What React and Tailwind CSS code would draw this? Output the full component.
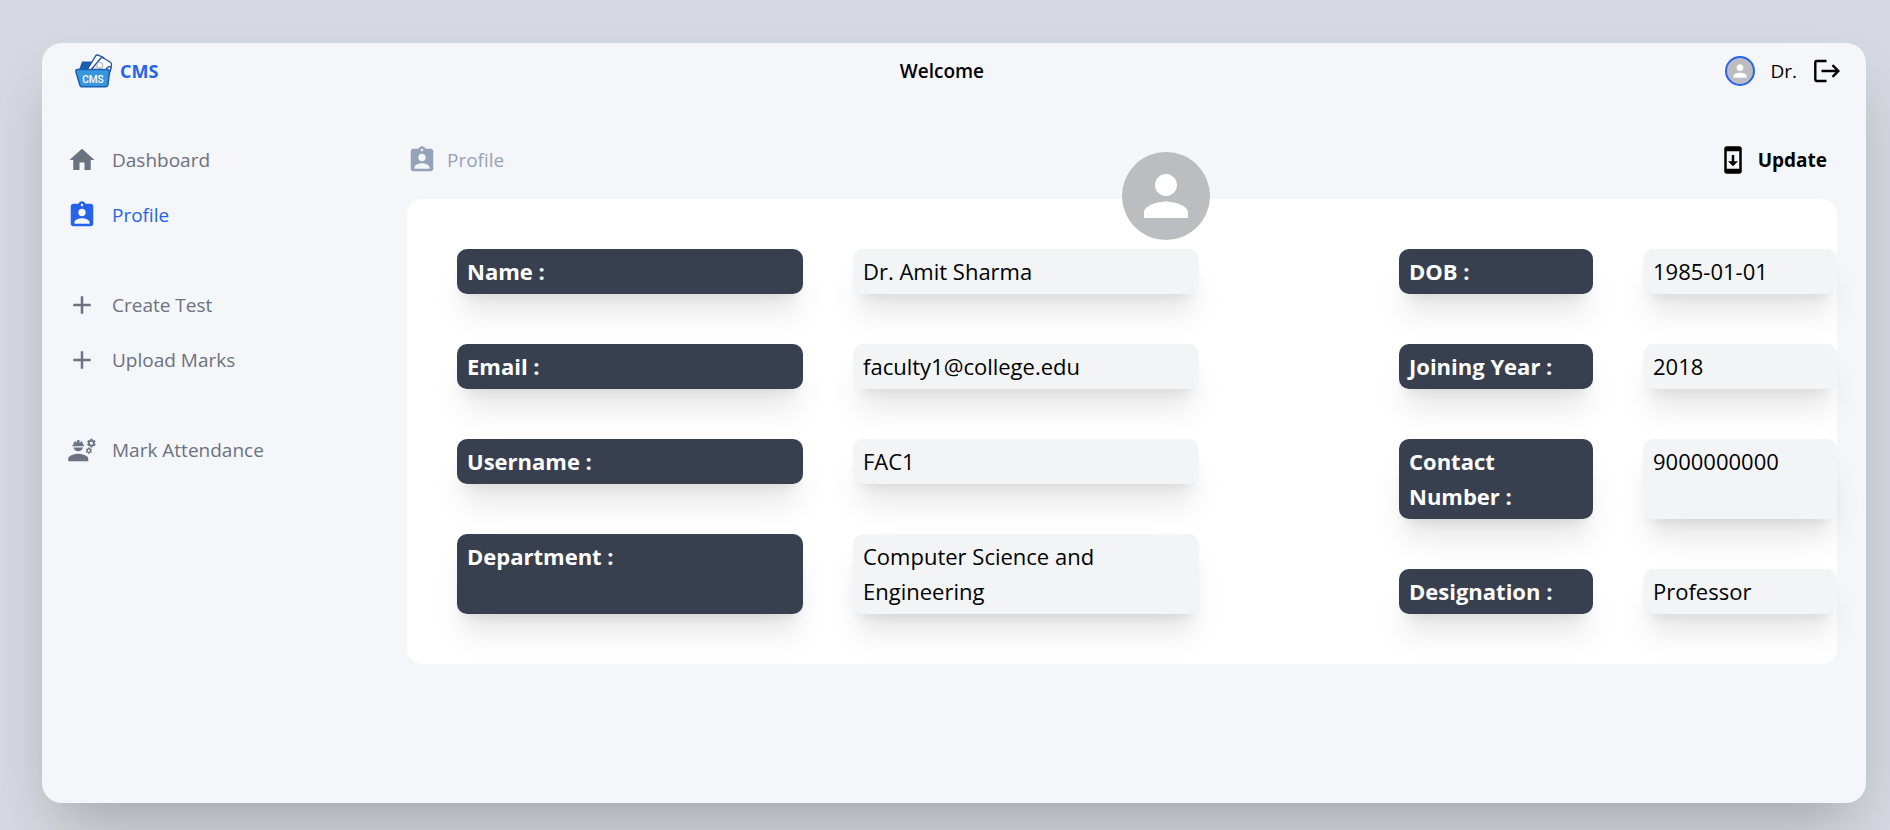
import { MdHome, MdAssignmentInd, MdAdd, MdEngineering, MdSystemUpdate, MdPerson } from "react-icons/md";

function Logo() {
  return (
    <svg viewBox="0 0 38 34" className="h-[34px] w-[38px]" role="img" aria-label="CMS logo">
      <path d="M1.500 16 4.500 14.500 7 7.500h10l1.500 3-1 6H3z" fill="#1c5fb0" />
      <path d="M12 16 20.500 2.200c.6-1 1.600-1.400 2.700-1L28.500 3.500 18 16z" fill="#fff" stroke="#1f4f9a" strokeWidth="1.300" />
      <path d="m15.500 16.500 10-12c.8-.9 1.700-1 2.800-.5L35 8c1.400.8 1.900 1.700 1.500 3L34 20.500 31 16.500z" fill="#fff" stroke="#1f4f9a" strokeWidth="1.300" />
      <circle cx="24.800" cy="11.300" r="3" fill="none" stroke="#b5bcc7" strokeWidth="1.200" />
      <path d="m20.500 14.500 1.500-2" stroke="#b5bcc7" strokeWidth="1" />
      <path d="M31.500 16c-.5-2.500 3-4.500 4.300-2.500.6 2-.6 4-2.300 6.500" fill="#fff" stroke="#1f4f9a" strokeWidth="1.300" />
      <path d="M2.500 15.500h30c1.300 0 2.200 1 2 2.400l-1.500 12.600c-.2 1.500-1.200 2.300-2.700 2.300H7.500c-1.500 0-2.500-.9-2.800-2.300L1 18c-.4-1.500.2-2.500 1.500-2.500z" fill="#3897dc" stroke="#1c5fb0" strokeWidth="1.500" />
      <text x="18" y="28.500" textAnchor="middle" fontSize="10" fontWeight="500" fontFamily="Roboto, sans-serif" fill="#fff">CMS</text>
    </svg>
  );
}

function LogoutIcon() {
  return (
    <svg viewBox="0 0 28 26" className="h-[26px] w-7" fill="none" stroke="currentColor" strokeWidth="2.400" aria-hidden="true">
      <path d="M14.500 3H4.500a1.200 1.200 0 0 0-1.200 1.200v17.600A1.200 1.200 0 0 0 4.500 23h10" />
      <path d="M9.500 13h16.500M20.500 7.200 26.300 13l-5.800 5.800" />
    </svg>
  );
}

const navGroups = [
  [
    { label: "Dashboard", Icon: MdHome },
    { label: "Profile", Icon: MdAssignmentInd, active: true },
  ],
  [
    { label: "Create Test", Icon: MdAdd },
    { label: "Upload Marks", Icon: MdAdd },
  ],
  [{ label: "Mark Attendance", Icon: MdEngineering }],
];

const personal = [
  ["Name", "Dr. Amit Sharma"],
  ["Email", "faculty1@college.edu"],
  ["Username", "FAC1"],
  ["Department", "Computer Science and Engineering"],
];

const employment = [
  ["DOB", "1985-01-01"],
  ["Joining Year", "2018"],
  ["Contact Number", "9000000000"],
  ["Designation", "Professor"],
];

const boxShadow = "shadow-[0_25px_31px_-6px_rgb(0_0_0/0.1),0_10px_13px_-8px_rgb(0_0_0/0.1)]";

function Details({ rows }) {
  return (
    <dl className="flex min-w-0 flex-col gap-[50px] text-[22px] leading-[35px]">
      {rows.map(([label, value]) => (
        <div key={label} className="grid grid-cols-2 gap-[50px]">
          <dt className={`rounded-[10px] bg-[#384050] px-2.5 py-[5px] font-bold text-white ${boxShadow}`}>{label} :</dt>
          <dd className={`rounded-[10px] bg-[#f3f4f6] px-2.5 py-[5px] text-black ${boxShadow}`}>{value}</dd>
        </div>
      ))}
    </dl>
  );
}

export default function App() {
  return (
    <div className="flex min-h-screen bg-[#d6d9e1] pt-[43px] pr-6 pb-[27px] pl-[42px] font-['Open_Sans','Noto_Sans',sans-serif] text-black">
      <div className="flex min-w-0 flex-1 flex-col rounded-[20px] bg-[#f4f6fa] shadow-[0_31px_62px_-15px_rgb(0_0_0/0.25)]">
        <header className="flex h-14 items-center justify-between pr-[26px] pl-[33px] text-[19px]">
          <a href="#home" className="flex items-center gap-[7px] text-lg font-bold text-[#2563eb]">
            <Logo />
            CMS
          </a>
          <h1 className="font-semibold">Welcome</h1>
          <div className="flex items-center gap-[15px]">
            <span className="flex size-[30px] items-center justify-center rounded-full border-2 border-[#2563eb] bg-[#bcbdc1] text-white">
              <MdPerson size={20} />
            </span>
            Dr.
            <button type="button" aria-label="Log out">
              <LogoutIcon />
            </button>
          </div>
        </header>

        <div className="flex flex-1">
          <nav className="flex w-[365px] shrink-0 flex-col gap-[60px] pt-[46px] pl-[25px]">
            {navGroups.map((group, i) => (
              <ul key={i} className="flex flex-col gap-[25px]">
                {group.map(({ label, Icon, active }) => (
                  <li key={label}>
                    <a
                      href="#nav"
                      aria-current={active ? "page" : undefined}
                      className={`flex h-[30px] items-center gap-[15px] text-[19px] ${active ? "text-[#2563eb]" : "text-[#6b7280]"}`}
                    >
                      <Icon size={30} />
                      {label}
                    </a>
                  </li>
                ))}
              </ul>
            ))}
          </nav>

          <main className="min-w-0 flex-1 pt-[46px] pr-[29px]">
            <div className="flex h-[30px] items-center justify-between pr-2.5 text-[19px]">
              <h2 className="flex items-center gap-2.5 text-[#94a3b8]">
                <MdAssignmentInd size={30} />
                Profile
              </h2>
              <button type="button" className="flex items-center gap-2.5 font-bold">
                <MdSystemUpdate size={30} />
                Update
              </button>
            </div>
            <section className="relative mt-6 grid grid-cols-[742fr_438fr] gap-[200px] rounded-[15px] bg-white py-[50px] pl-[50px]">
              <span className="absolute -top-[47px] left-1/2 flex size-[88px] items-center justify-center rounded-full bg-[#bcbdc1] text-white">
                <MdPerson size={66} />
              </span>
              <Details rows={personal} />
              <Details rows={employment} />
            </section>
          </main>
        </div>
      </div>
    </div>
  );
}
